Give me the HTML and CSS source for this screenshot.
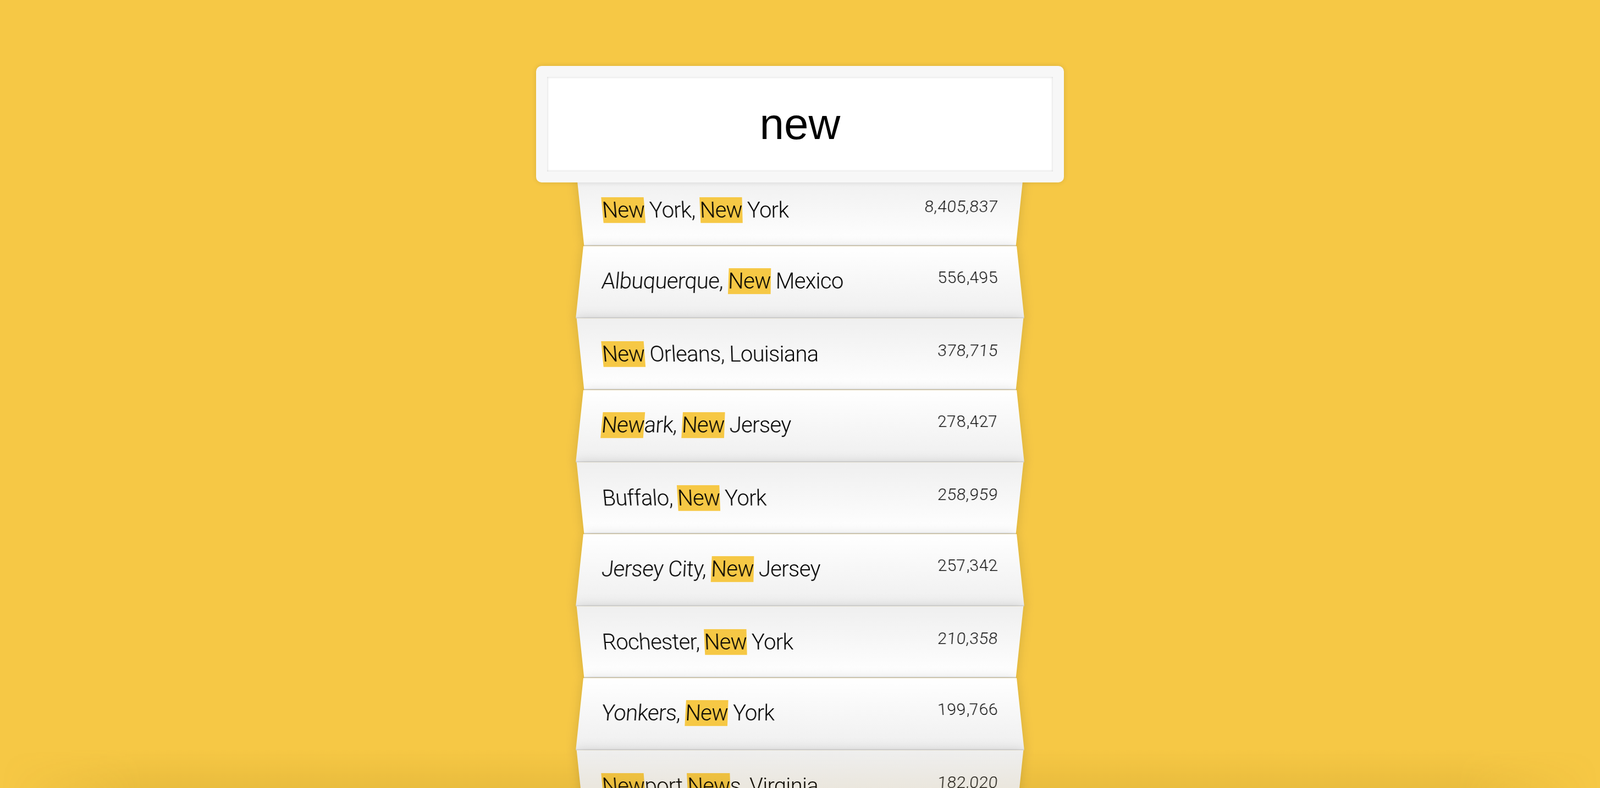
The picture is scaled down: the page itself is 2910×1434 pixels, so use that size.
FILE: index.html
```html
<!DOCTYPE html>
<html>
<head>
<meta charset="utf-8">
<title>Type Ahead</title>
<link rel="stylesheet" href="styles.css">
</head>
<body>
<form class="search-form">
  <input type="text" class="search" placeholder="City or State" value="new">
  <ul class="suggestions">
    <li><span class="name"><span class="hl">New</span> York, <span class="hl">New</span> York</span><span class="population">8,405,837</span></li>
    <li><span class="name">Albuquerque, <span class="hl">New</span> Mexico</span><span class="population">556,495</span></li>
    <li><span class="name"><span class="hl">New</span> Orleans, Louisiana</span><span class="population">378,715</span></li>
    <li><span class="name"><span class="hl">New</span>ark, <span class="hl">New</span> Jersey</span><span class="population">278,427</span></li>
    <li><span class="name">Buffalo, <span class="hl">New</span> York</span><span class="population">258,959</span></li>
    <li><span class="name">Jersey City, <span class="hl">New</span> Jersey</span><span class="population">257,342</span></li>
    <li><span class="name">Rochester, <span class="hl">New</span> York</span><span class="population">210,358</span></li>
    <li><span class="name">Yonkers, <span class="hl">New</span> York</span><span class="population">199,766</span></li>
    <li><span class="name"><span class="hl">New</span>port <span class="hl">New</span>s, Virginia</span><span class="population">182,020</span></li>
  </ul>
</form>
</body>
</html>
```
FILE: styles.css
```css
html {
  box-sizing: border-box;
  background: #f6c845;
  font-family: "Roboto", "Liberation Sans", sans-serif;
  font-size: 40px;
  font-weight: 300;
  overflow: hidden;
  height: 100%;
}
*, *::before, *::after {
  box-sizing: inherit;
}
body {
  margin: 0;
  height: 100%;
  overflow: hidden;
  position: relative;
}
body::after {
  content: "";
  position: fixed;
  left: 0;
  right: 0;
  bottom: 0;
  height: 70px;
  background: linear-gradient(to bottom, rgba(130, 90, 0, 0), rgba(130, 90, 0, 0.1));
  -webkit-mask-image: linear-gradient(to right, transparent 0, #000 260px, #000 calc(100% - 260px), transparent 100%);
  mask-image: linear-gradient(to right, transparent 0, #000 260px, #000 calc(100% - 260px), transparent 100%);
  pointer-events: none;
  z-index: 5;
}
.search-form {
  max-width: 800px;
  margin: 100px auto;
}
input.search {
  display: block;
  width: 120%;
  margin: 0;
  padding: 40px;
  position: relative;
  left: -10%;
  top: 20px;
  z-index: 2;
  font-family: "Liberation Sans", Arial, sans-serif;
  font-size: 80px;
  font-weight: 400;
  line-height: 92px;
  color: #000;
  text-align: center;
  outline: 0;
  border: 20px solid #f7f7f7;
  border-radius: 10px;
  background: #fff;
  box-shadow: 0 0 10px rgba(0, 0, 0, 0.12), inset 0 0 4px rgba(0, 0, 0, 0.19);
}
.suggestions {
  margin: 0;
  padding: 0;
  position: relative;
}
.suggestions li {
  list-style: none;
  border-bottom: 2px solid #d8d8d8;
  box-shadow: 0 0 20px rgba(0, 0, 0, 0.14);
  margin: 0;
  padding: 40px;
  display: flex;
  justify-content: space-between;
  line-height: 49px;
  color: #000;
}
.suggestions li:nth-child(even) {
  transform: perspective(200px) rotateX(3deg) translateY(4px) scale(1.001);
  background: linear-gradient(to bottom, #ffffff 0%, #efefef 100%);
}
.suggestions li:nth-child(odd) {
  transform: perspective(200px) rotateX(-3deg) translateY(6px);
  background: linear-gradient(to top, #ffffff 0%, #efefef 100%);
}
.name {
  letter-spacing: -0.7px;
}
.population {
  font-family: "Roboto", "Liberation Sans", sans-serif;
  font-size: 30px;
  font-weight: 300;
  line-height: 36px;
  letter-spacing: 0.6px;
  color: #111;
}
.hl {
  background: #f6c845;
}
```
